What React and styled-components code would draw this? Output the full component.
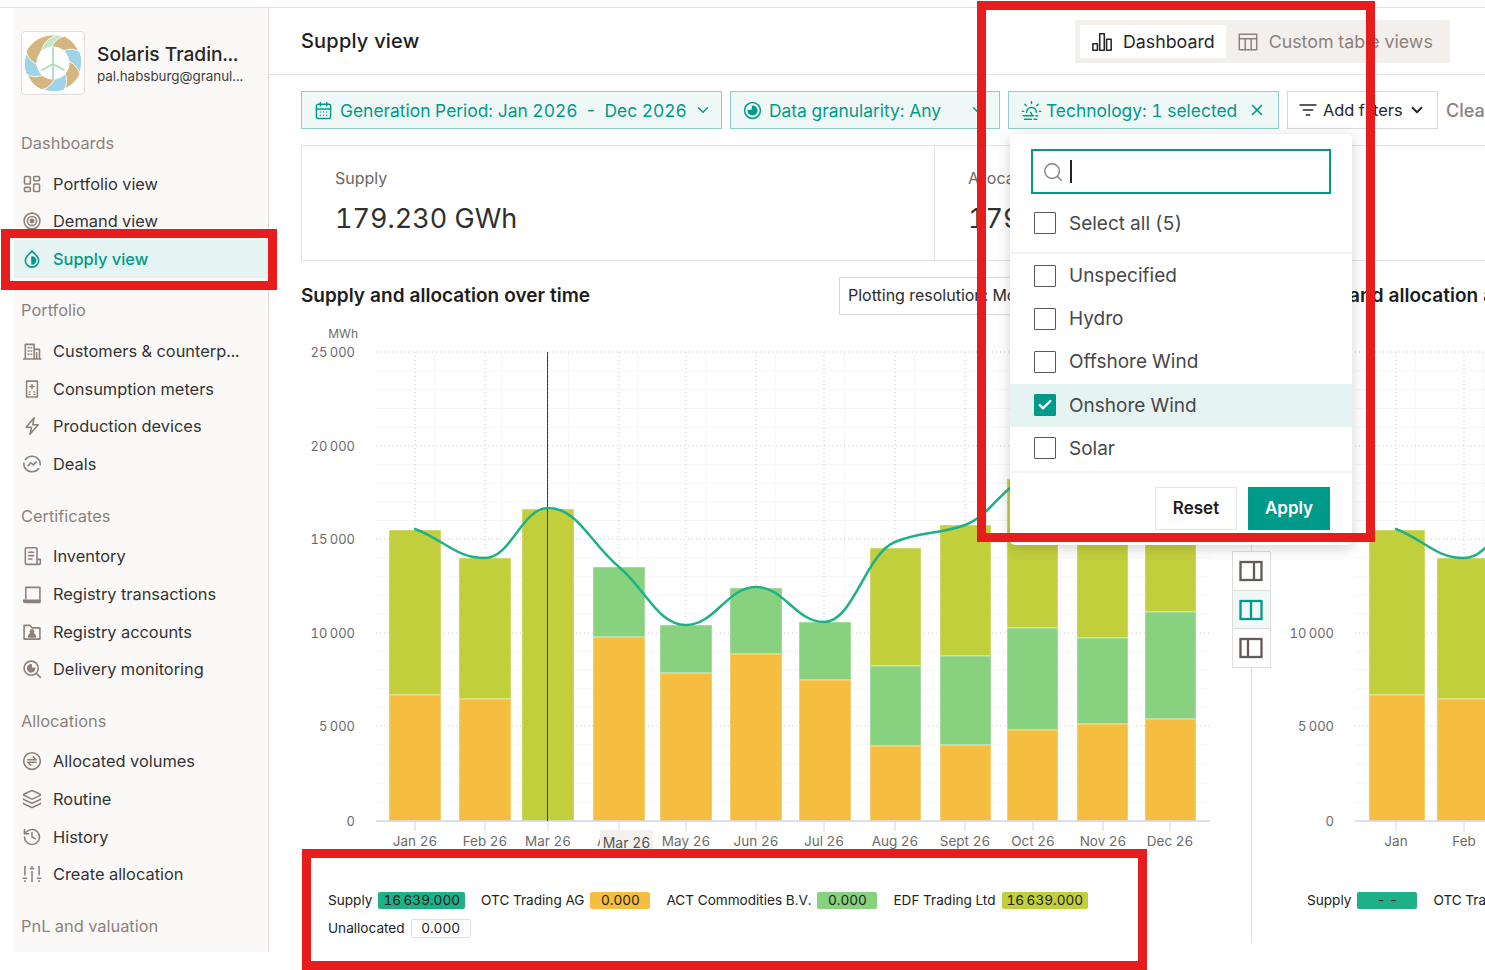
import React from 'react';
import styled, { createGlobalStyle } from 'styled-components';
import {
  CalendarDays, ChevronDown, X, Search, Check, Layers, History, LayoutDashboard,
} from 'lucide-react';

const TEAL = '#009a8a';
const GREY = '#8c817b';
const OLIVE = '#c1cf3c';
const GREEN = '#88d17f';
const ORANGE = '#f5be41';
const LINE = '#1eb087';

const GlobalStyle = createGlobalStyle`
  html, body { margin: 0; padding: 0; background: #fff; overflow: hidden; }
  body {
    font-family: Inter, "Liberation Sans", sans-serif;
    font-variant-numeric: tabular-nums;
    color: #2b2b2b;
  }
  * { box-sizing: border-box; }
`;

const Page = styled.div`
  position: relative;
  width: 1485px;
  height: 970px;
  overflow: hidden;
  padding-top: 7px;
`;

const Shell = styled.div`
  display: flex;
  border-top: 1px solid #e4e2e0;
  height: 963px;
`;

/* sidebar */
const Sidebar = styled.aside`
  flex: none;
  width: 255px;
  height: 944px;
  margin-left: 14px;
  background: #fbf9f8;
  border-right: 1px solid #dfdad7;
  overflow: hidden;
`;

const Account = styled.div`
  display: flex;
  align-items: center;
  gap: 12px;
  padding: 23px 0 0 7px;
  margin-bottom: 36.2px;
`;

const LogoBox = styled.div`
  flex: none;
  width: 64px;
  height: 64px;
  border: 1px solid #e2dedb;
  border-radius: 4px;
  background: #fff;
  display: flex;
  align-items: center;
  justify-content: center;
`;

const AccountText = styled.div`
  padding-top: 2px;
  white-space: nowrap;
`;

const AccountName = styled.div`
  font-size: 19.2px;
  line-height: 24px;
  font-weight: 500;
  color: #262626;
`;

const AccountMail = styled.div`
  font-size: 13.4px;
  line-height: 20px;
  color: #3d3d3d;
`;

const NavSection = styled.section`
  margin-bottom: 20.4px;
`;

const NavLabel = styled.div`
  height: 24px;
  line-height: 24px;
  padding-left: 7px;
  margin-bottom: 9.5px;
  font-size: 16.4px;
  color: ${GREY};
`;

const NavRow = styled.div`
  display: flex;
  align-items: center;
  gap: 11px;
  height: 37.8px;
  padding-left: 8px;
  font-size: 16.4px;
  white-space: nowrap;
  color: ${(p) => (p.$active ? TEAL : '#333')};
  font-weight: ${(p) => (p.$active ? 500 : 400)};
  background: ${(p) => (p.$active ? '#e6f3f3' : 'transparent')};
  & > svg { flex: none; color: ${(p) => (p.$active ? TEAL : GREY)}; }
`;

/* main */
const Main = styled.main`
  flex: 1;
  min-width: 0;
  overflow: hidden;
`;

const TopBar = styled.header`
  display: flex;
  align-items: center;
  justify-content: space-between;
  height: 67px;
  padding: 1px 35px 0 32px;
  border-bottom: 1px solid #e4e2e0;
`;

const PageTitle = styled.h1`
  margin: 0 0 2px;
  font-size: 20px;
  letter-spacing: 0.2px;
  font-weight: 500;
  color: #1d1d1d;
`;

const Tabs = styled.div`
  display: flex;
  width: 375px;
  height: 43px;
  padding: 5px;
  background: #f3efec;
`;

const Tab = styled.div`
  display: flex;
  align-items: center;
  gap: 10px;
  padding: 0 11px;
  font-size: 17.8px;
  white-space: nowrap;
  background: ${(p) => (p.$active ? '#fff' : 'transparent')};
  color: ${(p) => (p.$active ? '#262626' : GREY)};
`;

const FilterBar = styled.div`
  display: flex;
  gap: 8px;
  padding: 16px 0 0 32px;
  white-space: nowrap;
`;

const Filter = styled.div`
  flex: none;
  display: flex;
  align-items: center;
  width: ${(p) => p.$w}px;
  height: 38px;
  padding: 0 12px;
  gap: ${(p) => p.$gap || 7}px;
  font-size: 17.4px;
  color: ${TEAL};
  background: #f0f8f7;
  border: 1px solid #8fcfc8;
  & > span { flex: 1; }
  & > svg { flex: none; }
`;

const AddFilter = styled.div`
  flex: none;
  display: flex;
  align-items: center;
  width: 151px;
  height: 38px;
  padding: 0 12px 0 10px;
  gap: 5px;
  font-size: 16.4px;
  border: 1px solid #dcd8d5;
  color: #262626;
  & > span { flex: 1; }
  & > svg { flex: none; }
`;

const ClearLink = styled.div`
  flex: none;
  display: flex;
  align-items: center;
  font-size: 18px;
  font-weight: 500;
  color: ${GREY};
`;

const Kpis = styled.div`
  display: flex;
  height: 116px;
  margin: 16px 0 0 32px;
  border: 1px solid #e4e2e0;
  border-right: none;
`;

const Kpi = styled.div`
  flex: none;
  width: 632px;
  padding: 21px 33px;
  & + & { border-left: 1px solid #e4e2e0; }
`;

const KpiLabel = styled.div`
  font-size: 16px;
  line-height: 22px;
  color: #6f6662;
`;

const KpiValue = styled.div`
  margin-top: 12px;
  font-size: 27px;
  line-height: 36px;
  color: #303030;
`;

const Charts = styled.div`
  display: flex;
  margin: 16px 0 0 32px;
  height: 666px;
`;

const ChartPanel = styled.section`
  flex: none;
  position: relative;
  width: 920px;
`;

const ChartHead = styled.div`
  display: flex;
  align-items: center;
  justify-content: space-between;
  height: 38px;
  padding-right: ${(p) => p.$pad || 0}px;
  white-space: nowrap;
`;

const ChartTitle = styled.h2`
  margin: -2px 0 0;
  font-size: 19px;
  font-weight: 600;
  color: #1d1d1d;
`;

const SelectBox = styled.div`
  display: flex;
  align-items: center;
  width: 260px;
  height: 38px;
  padding: 0 8px 2px;
  font-size: 16px;
  color: #2b2b2b;
  border: 1px solid #dcd8d5;
`;

const Plot = styled.svg`
  display: block;
  margin-top: 10px;
  overflow: hidden;
  font-family: Inter, "Liberation Sans", sans-serif;
`;

const PlotTip = styled.div`
  position: absolute;
  left: 299px;
  top: 553px;
  width: 53px;
  height: 21px;
  line-height: 26px;
  text-align: center;
  font-size: 14px;
  color: #555;
  background: #f3f0ee;
  border-radius: 2px 2px 0 0;
`;

const Legend = styled.div`
  display: flex;
  flex-wrap: wrap;
  gap: 10px 16px;
  width: 800px;
  margin-top: 41px;
  padding-left: 27px;
`;

const LegendItem = styled.div`
  display: flex;
  align-items: center;
  gap: 6px;
  height: 18px;
  font-size: 13.6px;
  color: #222;
  white-space: nowrap;
`;

const Badge = styled.span`
  display: inline-block;
  min-width: 60px;
  padding: 0 5px;
  height: ${(p) => (p.$color ? 17 : 19)}px;
  line-height: 17px;
  text-align: center;
  font-size: 13.6px;
  color: #222;
  border-radius: 2px;
  background: ${(p) => p.$color || '#fff'};
  border: ${(p) => (p.$color ? 'none' : '1px solid #d9e2e0')};
`;

const DividerCol = styled.div`
  flex: none;
  position: relative;
  width: 59px;
  display: flex;
  justify-content: center;
  padding-top: 275px;
  &::before {
    content: '';
    position: absolute;
    left: 30px;
    top: 0;
    bottom: 0;
    width: 1px;
    background: #e0e0e0;
  }
`;

const ToggleStack = styled.div`
  position: relative;
  display: flex;
  flex-direction: column;
  width: 39px;
  height: 117px;
  margin: -1px 0 0 1px;
  border: 1px solid #dfdcda;
  background: #fff;
`;

const ToggleCell = styled.div`
  flex: 1;
  display: flex;
  align-items: center;
  justify-content: center;
  color: ${(p) => (p.$active ? TEAL : '#625b57')};
  background: ${(p) => (p.$active ? '#f0f8f7' : '#fff')};
  & + & { border-top: 1px solid #dfdcda; }
`;

/* technology popup */
const Popup = styled.div`
  position: absolute;
  left: 1010px;
  top: 134px;
  width: 342px;
  height: 411px;
  padding-top: 15px;
  background: #fff;
  border-radius: 5px;
  box-shadow: 0 3px 14px rgba(60, 50, 45, 0.22);
`;

const SearchBox = styled.div`
  display: flex;
  align-items: center;
  gap: 6px;
  width: 300px;
  height: 45px;
  margin-left: 21px;
  padding-left: 9px;
  border: 2px solid ${TEAL};
  color: ${GREY};
`;

const Caret = styled.div`
  width: 2px;
  height: 23px;
  background: #222;
`;

const OptionRow = styled.div`
  display: flex;
  align-items: center;
  gap: 13px;
  height: ${(p) => p.$h || 43.2}px;
  padding-left: 24px;
  font-size: 19px;
  color: #484848;
  background: ${(p) => (p.$on ? '#e6f3f3' : 'transparent')};
  border-bottom: ${(p) => (p.$line ? '2px solid #f5f3f2' : 'none')};
`;

const Tick = styled.div`
  flex: none;
  display: flex;
  align-items: center;
  justify-content: center;
  width: 22px;
  height: 22px;
  color: #fff;
  background: ${(p) => (p.$on ? TEAL : '#fff')};
  border: 1px solid ${(p) => (p.$on ? TEAL : '#5e5856')};
  border-radius: 1px;
`;

const OptionList = styled.div`
  padding-bottom: 1px;
  border-bottom: 2px solid #f5f3f2;
`;

const PopupFoot = styled.div`
  display: flex;
  justify-content: flex-end;
  gap: 11px;
  padding: 14px 22px 0 0;
`;

const FootBtn = styled.div`
  display: flex;
  align-items: center;
  justify-content: center;
  width: 82px;
  height: 43px;
  font-size: 17px;
  font-weight: 600;
  color: ${(p) => (p.$primary ? '#fff' : '#1d1d1d')};
  background: ${(p) => (p.$primary ? TEAL : '#fff')};
  border: 1px solid ${(p) => (p.$primary ? TEAL : '#e8e5e3')};
`;

/* annotation frames of the screenshot */
const RedFrame = styled.div`
  position: absolute;
  left: ${(p) => p.$x}px;
  top: ${(p) => p.$y}px;
  width: ${(p) => p.$w}px;
  height: ${(p) => p.$h}px;
  border: 9px solid #e71c1c;
  pointer-events: none;
`;

const Svg = ({ size = 20, children, sw = 1.9, ...rest }) => (
  <svg width={size} height={size} viewBox="0 0 24 24" fill="none" stroke="currentColor" strokeWidth={sw} strokeLinecap="round" strokeLinejoin="round" {...rest}>
    {children}
  </svg>
);

// clockwise from the top, every 45deg
const petals = ['#c3e6cd', '#d6b680', '#9fd3ea', '#d6b680', '#9fd3ea', '#d6b680', '#9fd3ea', '#d6b680'];

const Logo = () => (
  <svg width="60" height="60" viewBox="0 0 60 60">
    {petals.map((color, i) => (
      <path
        key={i}
        fill={color}
        stroke="#fff"
        strokeWidth="0.8"
        transform={`rotate(${i * 45 - 10} 30 30)`}
        d="M24 1.500 C36 -0.500 48 5 55 17 C48 12 41 11 35 13 C29 14 24 17 21 21 C18 14 19 7 24 1.500 Z"
      />
    ))}
    <circle cx="30" cy="30" r="16.500" fill="#fff" />
    <g stroke="#a5dcb5" strokeWidth="1.700" fill="none" strokeLinecap="round">
      <path d="M30 31 L30 15" />
      <path d="M30 31 L30 46" />
      <path d="M30 31 L19 37" />
      <path d="M30 31 L41 37" />
    </g>
  </svg>
);

const DropCircle = () => (
  <Svg>
    <path d="M12 2.500c2 2.800 8 6 8 11.200a8 8 0 0 1-16 0C4 8.500 10 5.300 12 2.500Z" />
    <path d="M12 9.500a4.200 4.200 0 0 1 0 8.400Z" fill="currentColor" />
  </Svg>
);

const DemandIcon = () => (
  <Svg>
    <circle cx="12" cy="12" r="9.500" />
    <circle cx="12" cy="12" r="5.500" />
    <circle cx="12" cy="12" r="2" fill="currentColor" />
  </Svg>
);

const BuildingIcon = () => (
  <Svg>
    <path d="M2 21.500h20.500M4 21V4h10.500v17M14.500 10H21v11M17.500 14v7" />
    <path d="M7.500 8h1M11 8h.5M7.500 12h1M11 12h.5M7.500 16h1M11 16h.5" />
  </Svg>
);

const MeterIcon = () => (
  <Svg>
    <rect x="5.500" y="2.500" width="13" height="19" />
    <path d="M12 6.500v5M9.500 9h5M9 15.500h.5M14.500 15.500h.5M9 18.500h.5M14.500 18.500h.5" />
  </Svg>
);

const BoltIcon = () => (
  <Svg>
    <path d="M14.500 2L5 13.500h6.500L9.500 22 19.500 10.500H13Z" />
  </Svg>
);

const DealsIcon = () => (
  <Svg>
    <path d="M20.500 7.500A10 10 0 0 0 4 6.500M3.500 16.500a10 10 0 0 0 16.500 1M21.800 13A10 10 0 0 0 21 8M2.300 11a10 10 0 0 0 .7 5" />
    <path d="M7.500 14l3-3.500 3 2.500 3.500-3.500" />
  </Svg>
);

const InventoryIcon = () => (
  <Svg>
    <path d="M18 16V3.500a1.500 1.500 0 0 0-1.500-1.500h-11A1.500 1.500 0 0 0 4 3.500v17A1.500 1.500 0 0 0 5.500 22H21a1.500 1.500 0 0 0 1-1.500V16h-4v6" />
    <path d="M8 7.500h6M8 11.500h6M8 15.500h4" />
  </Svg>
);

const RegistryTxIcon = () => (
  <Svg>
    <path d="M4.500 18V4h17v16" />
    <path d="M2 19.500h19.500v2.500H3.500A1.500 1.500 0 0 1 2 20.500Z" fill="currentColor" />
  </Svg>
);

const RegistryAccIcon = () => (
  <Svg>
    <path d="M2.500 20.500V4h7l2.500 3h9.500v13.500Z" />
    <circle cx="12" cy="11.500" r="2" fill="currentColor" />
    <path d="M8 18c0-5 8-5 8 0Z" fill="currentColor" />
  </Svg>
);

const DeliveryIcon = () => (
  <Svg>
    <circle cx="11" cy="11" r="8.500" />
    <path d="M17.500 17.500L22 22" />
    <path d="M11 7a4.200 4.200 0 1 0 4.200 4.200H11Z" fill="currentColor" />
  </Svg>
);

const AllocatedIcon = () => (
  <Svg>
    <circle cx="12" cy="12" r="10" />
    <path d="M7 10.500h10L13.500 7M17 13.500H7l3.500 3.500" />
  </Svg>
);

const SlidersIcon = () => (
  <Svg>
    <path d="M3.500 3v10M12 9v12M20.500 3v10M1.500 17h4M3.500 20v1M10 5.500h4M12 3v.5M18.500 17h4M20.500 20v1" />
  </Svg>
);

const BarsIcon = () => (
  <Svg size={22} sw={1.7}>
    <rect x="2" y="14" width="5" height="7" />
    <rect x="9.500" y="3" width="5" height="18" />
    <rect x="17" y="9" width="5" height="12" />
  </Svg>
);

const TableIcon = () => (
  <Svg size={22} sw={1.6}>
    <rect x="2.500" y="3.500" width="19" height="17" />
    <path d="M2.500 8.500h19M9 8.500v12M15.500 8.500v12" />
  </Svg>
);

const GranularityIcon = () => (
  <Svg size={19}>
    <circle cx="12" cy="12" r="10" />
    <path d="M12 6.500a5.500 5.500 0 1 1-5.500 5.500h5.500Z" fill="currentColor" />
  </Svg>
);

const TechIcon = () => (
  <Svg size={21} sw={1.7}>
    <path d="M6.500 14a5.500 5.500 0 1 1 11 0" />
    <path d="M12 2v2M4.500 5l1.500 1.500M19.500 5L18 6.500M1.500 13h1.500M21 13h1.500M2.500 18h12M4 22h8M17 18h2M15 22h3M11 14l2 4" />
  </Svg>
);

const AddFilterIcon = () => (
  <Svg size={20} sw={2}>
    <path d="M2.500 6h19M6.500 12h11M10 18h4" />
  </Svg>
);

const PaneIcon = ({ split }) => (
  <svg width="24" height="22" viewBox="0 0 24 22" fill="none" stroke="currentColor" strokeWidth="2.300">
    <rect x="1.500" y="2" width="21" height="18" />
    <path d={`M${split} 2v18`} />
  </svg>
);

const nav = [
  ['Dashboards', [
    [LayoutDashboard, 'Portfolio view'],
    [DemandIcon, 'Demand view'],
    [DropCircle, 'Supply view', true],
  ]],
  ['Portfolio', [
    [BuildingIcon, 'Customers & counterp...'],
    [MeterIcon, 'Consumption meters'],
    [BoltIcon, 'Production devices'],
    [DealsIcon, 'Deals'],
  ]],
  ['Certificates', [
    [InventoryIcon, 'Inventory'],
    [RegistryTxIcon, 'Registry transactions'],
    [RegistryAccIcon, 'Registry accounts'],
    [DeliveryIcon, 'Delivery monitoring'],
  ]],
  ['Allocations', [
    [AllocatedIcon, 'Allocated volumes'],
    [Layers, 'Routine'],
    [History, 'History'],
    [SlidersIcon, 'Create allocation'],
  ]],
  ['PnL and valuation', []],
];

// pixel values read off the chart: y of 0 is 821, 5000 is ~94px
const months = [
  { l: 'Jan 26', c: 415, x: 389, w: 52, top: 530, mid: 695, low: 695 },
  { l: 'Feb 26', c: 485, x: 459, w: 52, top: 558, mid: 699, low: 699 },
  { l: 'Mar 26', c: 548, x: 522, w: 52, top: 509, mid: 821, low: 821 },
  { l: 'Apr 26', c: 619, x: 593, w: 52, top: 567, mid: 567, low: 637 },
  { l: 'May 26', c: 686, x: 660, w: 52, top: 625, mid: 625, low: 673 },
  { l: 'Jun 26', c: 756, x: 730, w: 52, top: 588, mid: 588, low: 654 },
  { l: 'Jul 26', c: 824, x: 799, w: 52, top: 622, mid: 622, low: 680 },
  { l: 'Aug 26', c: 895, x: 870, w: 51, top: 548, mid: 666, low: 746 },
  { l: 'Sept 26', c: 965, x: 940, w: 51, top: 525, mid: 656, low: 745 },
  { l: 'Oct 26', c: 1033, x: 1007, w: 51, top: 479, mid: 628, low: 730 },
  { l: 'Nov 26', c: 1103, x: 1077, w: 51, top: 500, mid: 638, low: 724 },
  { l: 'Dec 26', c: 1170, x: 1145, w: 51, top: 505, mid: 612, low: 719 },
];

const linePoints = [
  [415, 529], [485, 558], [548, 508], [619, 567], [686, 625], [756, 587], [824, 622], [895, 542], [965, 525], [1033, 479], [1103, 500], [1170, 505],
];

// monotone cubic through the points, like the chart lib does
function smoothPath(pts) {
  const slope = (a, b) => (b[1] - a[1]) / (b[0] - a[0]);
  const m = pts.map((p, i) => {
    if (i === 0) return slope(p, pts[1]) * 0.9;
    if (i === pts.length - 1) return slope(pts[i - 1], p);
    const s0 = slope(pts[i - 1], p);
    const s1 = slope(p, pts[i + 1]);
    return s0 * s1 <= 0 ? 0 : (2 * s0 * s1) / (s0 + s1);
  });
  let d = `M${pts[0][0]} ${pts[0][1]}`;
  for (let i = 0; i < pts.length - 1; i++) {
    const h = (pts[i + 1][0] - pts[i][0]) / 2.4;
    d += ` C${pts[i][0] + h} ${pts[i][1] + m[i] * h} ${pts[i + 1][0] - h} ${pts[i + 1][1] - m[i + 1] * h} ${pts[i + 1][0]} ${pts[i + 1][1]}`;
  }
  return d;
}

const yTicks = [[25000, 352], [20000, 446], [15000, 539], [10000, 633], [5000, 726], [0, 821]];
const fmt = (n) => (n === 0 ? '0' : `${Math.floor(n / 1000)}\u2009000`);

const BarChart = ({ data, points, crosshair }) => {
  // svg origin in page coordinates
  const ox = 301;
  const oy = 325;
  const right = 1210;
  const minor = [];
  for (let i = 0; i < 5; i++) {
    for (let k = 1; k < 5; k++) {
      minor.push(yTicks[i][1] + ((yTicks[i + 1][1] - yTicks[i][1]) * k) / 5);
    }
  }
  return (
    <Plot width="920" height="525" viewBox={`${ox} ${oy} 920 525`}>
      {minor.map((y) => <line key={y} x1="376" x2={right} y1={y} y2={y} stroke="#f5f5f5" />)}
      {data.map((d, i) => i < data.length - 1 && (
        <line key={d.l} x1={(d.c + data[i + 1].c) / 2 - 15} x2={(d.c + data[i + 1].c) / 2 - 15} y1="352" y2="821" stroke="#f5f5f5" />
      ))}
      {yTicks.slice(0, 5).map(([v, y]) => (
        <line key={v} x1="376" x2={right} y1={y} y2={y} stroke="#c9c9c9" strokeDasharray="1 3" />
      ))}
      {data.map((d) => (
        <line key={d.l} x1={d.c} x2={d.c} y1="352" y2="821" stroke="#c9c9c9" strokeDasharray="1 3" />
      ))}
      {data.map((d) => (
        <g key={d.l} stroke="rgba(255,255,255,0.45)">
          {d.mid > d.top && <rect x={d.x} y={d.top} width={d.w} height={d.mid - d.top} fill={OLIVE} />}
          {d.low > d.mid && <rect x={d.x} y={d.mid} width={d.w} height={d.low - d.mid} fill={GREEN} />}
          {d.low < 821 && <rect x={d.x} y={d.low} width={d.w} height={821 - d.low} fill={ORANGE} />}
        </g>
      ))}
      <line x1="376" x2={right} y1="821" y2="821" stroke="#ccd6eb" strokeWidth="1.500" />
      {data.map((d) => (
        <g key={d.l}>
          <line x1={d.c} x2={d.c} y1="821" y2="831" stroke="#ccd6eb" />
          <text x={d.c} y="846" textAnchor="middle" fontSize="13.500" fill="#6b6b6b">{d.l}</text>
        </g>
      ))}
      <text x="358" y="338" textAnchor="end" fontSize="12" fill="#6b6b6b">MWh</text>
      {yTicks.map(([v, y]) => (
        <text key={v} x="355" y={y + 5} textAnchor="end" fontSize="13" fill="#6b6b6b">{fmt(v)}</text>
      ))}
      {crosshair && <line x1={crosshair} x2={crosshair} y1="352" y2="821" stroke="#1a4a70" />}
      <path d={smoothPath(points)} fill="none" stroke={LINE} strokeWidth="2.500" strokeLinecap="round" />
    </Plot>
  );
};

const legendLeft = [
  ['Supply', '16\u2009639.000', LINE],
  ['OTC Trading AG', '0.000', ORANGE],
  ['ACT Commodities B.V.', '0.000', GREEN],
  ['EDF Trading Ltd', '16\u2009639.000', OLIVE],
  ['Unallocated', '0.000', null],
];

const legendRight = [
  ['Supply', '- -', LINE],
  ['OTC Trading AG', '- -', ORANGE],
];

// right chart shares the y scale, only the x slots differ
const rightMonths = months.map((m, i) => ({
  ...m,
  l: m.l.replace(' 26', ''),
  c: 417 + 68 * i,
  x: 390 + 68 * i,
  w: 56,
}));
const rightPoints = linePoints.map(([, y], i) => [417 + 68 * i, y]);

const Options = ['Unspecified', 'Hydro', 'Offshore Wind', 'Onshore Wind', 'Solar'];

export default function App() {
  return (
    <Page>
      <GlobalStyle />
      <Shell>
        <Sidebar>
          <Account>
            <LogoBox><Logo /></LogoBox>
            <AccountText>
              <AccountName>Solaris Tradin...</AccountName>
              <AccountMail>pal.habsburg@granul...</AccountMail>
            </AccountText>
          </Account>
          {nav.map(([label, rows]) => (
            <NavSection key={label}>
              <NavLabel>{label}</NavLabel>
              {rows.map(([Icon, text, active]) => (
                <NavRow key={text} $active={active}>
                  <Icon size={20} strokeWidth={1.9} />
                  {text}
                </NavRow>
              ))}
            </NavSection>
          ))}
        </Sidebar>
        <Main>
          <TopBar>
            <PageTitle>Supply view</PageTitle>
            <Tabs>
              <Tab $active><BarsIcon />Dashboard</Tab>
              <Tab><TableIcon />Custom table views</Tab>
            </Tabs>
          </TopBar>
          <FilterBar>
            <Filter $w={421}>
              <CalendarDays size={19} strokeWidth={1.8} />
              <span>Generation Period: Jan 2026 {'\u2009'}-{'\u2009'} Dec 2026</span>
              <ChevronDown size={18} />
            </Filter>
            <Filter $w={270}>
              <GranularityIcon />
              <span>Data granularity: Any</span>
              <ChevronDown size={18} />
            </Filter>
            <Filter $w={271} $gap={4}>
              <TechIcon />
              <span>Technology: 1 selected</span>
              <X size={18} strokeWidth={2.2} />
            </Filter>
            <AddFilter>
              <AddFilterIcon />
              <span>Add filters</span>
              <ChevronDown size={18} strokeWidth={2.4} />
            </AddFilter>
            <ClearLink>Clear all</ClearLink>
          </FilterBar>
          <Kpis>
            <Kpi>
              <KpiLabel>Supply</KpiLabel>
              <KpiValue>179.230 GWh</KpiValue>
            </Kpi>
            <Kpi>
              <KpiLabel>Allocated</KpiLabel>
              <KpiValue>179.230 GWh</KpiValue>
            </Kpi>
          </Kpis>
          <Charts>
            <ChartPanel>
              <ChartHead $pad={122}>
                <ChartTitle>Supply and allocation over time</ChartTitle>
                <SelectBox>Plotting resolution: Monthly</SelectBox>
              </ChartHead>
              <BarChart data={months} points={linePoints} crosshair={547.5} />
              <PlotTip>Mar 26</PlotTip>
              <Legend>
                {legendLeft.map(([name, value, color]) => (
                  <LegendItem key={name}>{name}<Badge $color={color}>{value}</Badge></LegendItem>
                ))}
              </Legend>
            </ChartPanel>
            <DividerCol>
              <ToggleStack>
                <ToggleCell><PaneIcon split={15} /></ToggleCell>
                <ToggleCell $active><PaneIcon split={12} /></ToggleCell>
                <ToggleCell><PaneIcon split={9} /></ToggleCell>
              </ToggleStack>
            </DividerCol>
            <ChartPanel>
              <ChartHead>
                <ChartTitle>Supply and allocation across counterparties</ChartTitle>
              </ChartHead>
              <BarChart data={rightMonths} points={rightPoints} />
              <Legend>
                {legendRight.map(([name, value, color]) => (
                  <LegendItem key={name}>{name}<Badge $color={color}>{value}</Badge></LegendItem>
                ))}
              </Legend>
            </ChartPanel>
          </Charts>
        </Main>
      </Shell>

      <Popup>
        <SearchBox>
          <Search size={22} strokeWidth={1.6} />
          <Caret />
        </SearchBox>
        <OptionRow $h={60} $line>
          <Tick />Select all (5)
        </OptionRow>
        <OptionList>
          {Options.map((o) => (
            <OptionRow key={o} $on={o === 'Onshore Wind'}>
              <Tick $on={o === 'Onshore Wind'}>{o === 'Onshore Wind' && <Check size={16} strokeWidth={3.5} />}</Tick>
              {o}
            </OptionRow>
          ))}
        </OptionList>
        <PopupFoot>
          <FootBtn>Reset</FootBtn>
          <FootBtn $primary>Apply</FootBtn>
        </PopupFoot>
      </Popup>

      <RedFrame $x={977} $y={1} $w={398} $h={541} />
      <RedFrame $x={1} $y={229} $w={276} $h={61} />
      <RedFrame $x={302} $y={849} $w={845} $h={121} />
    </Page>
  );
}
